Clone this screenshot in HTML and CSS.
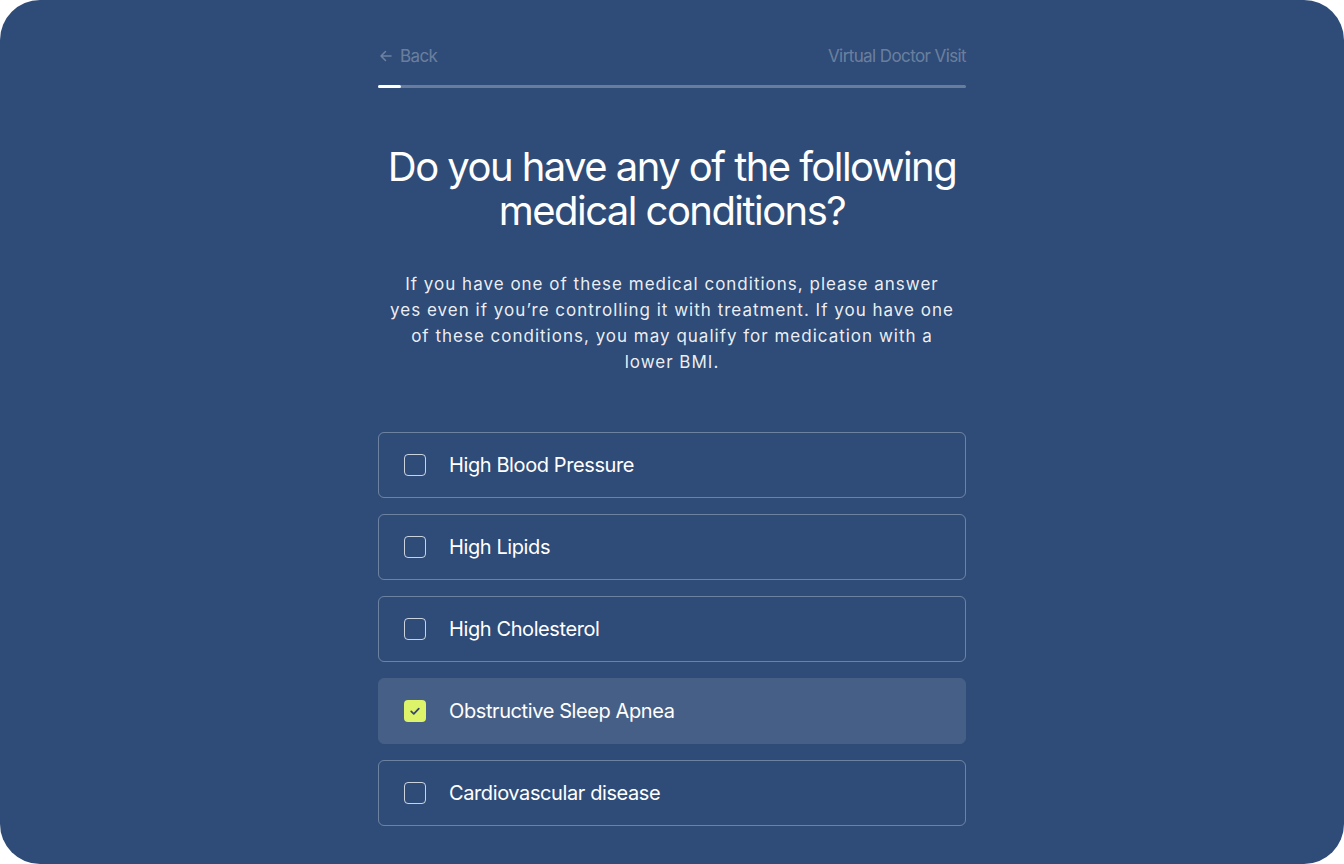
FILE: index.html
```html
<!DOCTYPE html>
<html lang="en">
<head>
<meta charset="utf-8">
<title>Virtual Doctor Visit</title>
<link rel="stylesheet" href="styles.css">
</head>
<body>
<div class="screen">
  <main class="column">
    <header class="topbar">
      <a class="back" href="#">
        <svg class="back-icon" viewBox="0 0 16 16" width="16" height="16" aria-hidden="true">
          <path d="M13 8H3M7.5 3.5L3 8l4.5 4.5" fill="none" stroke="currentColor" stroke-width="1.5" stroke-linecap="round" stroke-linejoin="round"/>
        </svg>
        <span>Back</span>
      </a>
      <span class="flow-name">Virtual Doctor Visit</span>
    </header>
    <div class="progress"><div class="progress-fill" style="width: 23px"></div></div>

    <h1 class="title">Do you have any of the following medical conditions?</h1>
    <p class="lead">If you have one of these medical conditions, please answer yes even if you’re controlling it with treatment. If you have one of these conditions, you may qualify for medication with a lower BMI.</p>

    <ul class="options">
      <li class="option"><span class="box"></span><span class="label">High Blood Pressure</span></li>
      <li class="option"><span class="box"></span><span class="label">High Lipids</span></li>
      <li class="option"><span class="box"></span><span class="label">High Cholesterol</span></li>
      <li class="option selected"><span class="box checked">
        <svg viewBox="0 0 22 22" width="22" height="22" aria-hidden="true"><path d="M7.2 11.3l2.6 2.5 5-5.2" fill="none" stroke="#34466a" stroke-width="1.7" stroke-linecap="round" stroke-linejoin="round"/></svg>
      </span><span class="label">Obstructive Sleep Apnea</span></li>
      <li class="option"><span class="box"></span><span class="label">Cardiovascular disease</span></li>
    </ul>
  </main>
</div>
</body>
</html>
```

FILE: styles.css
```css
* { box-sizing: border-box; }
html, body { margin: 0; padding: 0; background: #ffffff; }
body { font-family: Inter, "Noto Sans", "Liberation Sans", sans-serif; }

.screen {
  width: 1344px;
  height: 864px;
  background: #2f4c78;
  border-radius: 40px;
  overflow: hidden;
}

.column {
  width: 588px;
  margin: 0 auto;
  padding-top: 44px;
  color: #ffffff;
}

.topbar {
  display: flex;
  justify-content: space-between;
  align-items: center;
  height: 24px;
  font-size: 17px;
  letter-spacing: -0.6px;
  color: rgba(255, 255, 255, 0.3);
}
.back {
  display: flex;
  align-items: center;
  gap: 6px;
  color: inherit;
  text-decoration: none;
}
.back-icon { display: block; }

.progress {
  margin-top: 17px;
  height: 3px;
  background: rgba(255, 255, 255, 0.28);
  border-radius: 2px;
}
.progress-fill {
  height: 3px;
  background: #ffffff;
  border-radius: 2px;
}

.title {
  margin: 57px 0 0;
  font-size: 40px;
  line-height: 44px;
  font-weight: 400;
  letter-spacing: -1.55px;
  text-align: center;
}

.lead {
  margin: 38px auto 0;
  width: 566px;
  font-size: 17px;
  line-height: 26px;
  letter-spacing: 1px;
  text-align: center;
  color: rgba(255, 255, 255, 0.92);
}

.options {
  list-style: none;
  margin: 57px 0 0;
  padding: 0;
  display: flex;
  flex-direction: column;
  gap: 16px;
}
.option {
  height: 66px;
  display: flex;
  align-items: center;
  gap: 23px;
  padding-left: 25px;
  border: 1px solid rgba(255, 255, 255, 0.3);
  border-radius: 6px;
}
.option.selected {
  background: #465f87;
  border-color: #465f87;
}
.box {
  width: 22px;
  height: 22px;
  flex: none;
  border: 1.5px solid rgba(255, 255, 255, 0.75);
  border-radius: 4px;
}
.box.checked {
  border: none;
  background: #dcf36a;
}
.box svg { display: block; }
.label {
  font-size: 20px;
  letter-spacing: -0.4px;
  color: #ffffff;
}
```
